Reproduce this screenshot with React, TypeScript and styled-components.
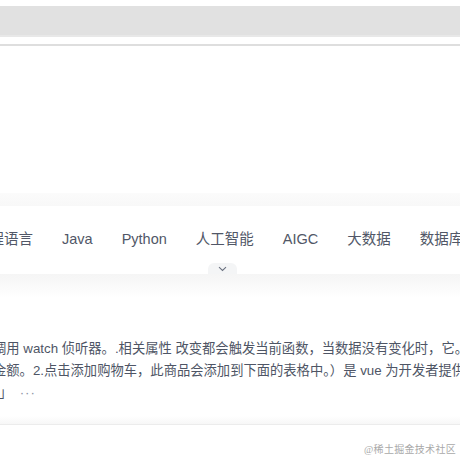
import styled, { createGlobalStyle } from 'styled-components'

const GlobalStyle = createGlobalStyle`
  html, body {
    margin: 0;
    padding: 0;
    background: #ffffff;
    overflow: hidden;
  }
  body {
    font-family: "Liberation Sans", Arial, "Noto Sans CJK SC", sans-serif;
  }
`

const Page = styled.div`
  width: 460px;
  height: 460px;
  display: flex;
  flex-direction: column;
  overflow: hidden;
  background: #ffffff;
`

const SearchStrip = styled.div`
  margin-top: 6px;
  height: 29px;
  background: #e1e1e1;
  border-bottom: 2px solid #e8e8e8;
`

const Rule = styled.div`
  margin-top: 7px;
  height: 2px;
  background: #dedede;
`

const Blank = styled.div<{ h: number }>`
  height: ${({ h }) => h}px;
  flex-shrink: 0;
`

const FadeTop = styled.div`
  height: 13px;
  background: linear-gradient(to bottom, #fbfbfb, #f8f8f8);
`

const NavBar = styled.nav`
  position: relative;
  height: 68px;
  background: #ffffff;
  display: flex;
  align-items: center;
`

const NavRow = styled.ul`
  list-style: none;
  margin: 0 0 0 -25px;
  padding: 0 0 2px;
  display: flex;
  gap: 29px;
  white-space: nowrap;
`

const NavItem = styled.li`
  font-size: 14.5px;
  line-height: 22px;
  color: #515767;
`

const MoreTab = styled.div`
  position: absolute;
  left: 208px;
  bottom: 0;
  width: 29px;
  height: 11px;
  background: #f4f5f6;
  border-radius: 6px 6px 0 0;
  display: flex;
  align-items: center;
  justify-content: center;
`

const FadeBottom = styled.div`
  height: 24px;
  background: linear-gradient(to bottom, #f5f5f5, #ffffff);
`

const Abstract = styled.div`
  margin-left: -7px;
  display: flex;
  flex-direction: column;
  font-size: 13.3px;
  line-height: 22px;
  color: #4e5565;
  white-space: nowrap;
`

const LastLine = styled.span`
  padding-left: 6px;
`

const Ellipsis = styled.span`
  margin-left: 14px;
  color: #8a919f;
  letter-spacing: 1px;
`

const Divider = styled.div`
  height: 8px;
  background: linear-gradient(to bottom, #ffffff, #f7f7f7);
  border-bottom: 1px solid #ececec;
`

const Footer = styled.div`
  flex: 1;
  display: flex;
  justify-content: flex-end;
  align-items: flex-end;
  padding: 0 4px 4px 0;
`

const Watermark = styled.span`
  font-family: "Liberation Serif", "Noto Sans CJK SC", serif;
  font-size: 10px;
  line-height: 12px;
  color: #a9a9a9;
  letter-spacing: 0.3px;
`

const navLabels = ['编程语言', 'Java', 'Python', '人工智能', 'AIGC', '大数据', '数据库']

export default function App() {
  return (
    <Page>
      <GlobalStyle />
      <SearchStrip />
      <Rule />
      <Blank h={147} />
      <FadeTop />
      <NavBar>
        <NavRow>
          {navLabels.map((label) => (
            <NavItem key={label}>{label}</NavItem>
          ))}
        </NavRow>
        <MoreTab>
          <svg width="9" height="6" viewBox="0 0 9 6">
            <path d="M1 1.2 L4.5 4.5 L8 1.2" fill="none" stroke="#6b7280" strokeWidth="1.1" />
          </svg>
        </MoreTab>
      </NavBar>
      <FadeBottom />
      <Blank h={40} />
      <Abstract>
        <span>调用 watch 侦听器。.相关属性 改变都会触发当前函数，当数据没有变化时，它。</span>
        <span>金额。2.点击添加购物车，此商品会添加到下面的表格中。）是 vue 为开发者提供的</span>
        <LastLine>
          」<Ellipsis>···</Ellipsis>
        </LastLine>
      </Abstract>
      <Blank h={12} />
      <Divider />
      <Footer>
        <Watermark>@稀土掘金技术社区</Watermark>
      </Footer>
    </Page>
  )
}
